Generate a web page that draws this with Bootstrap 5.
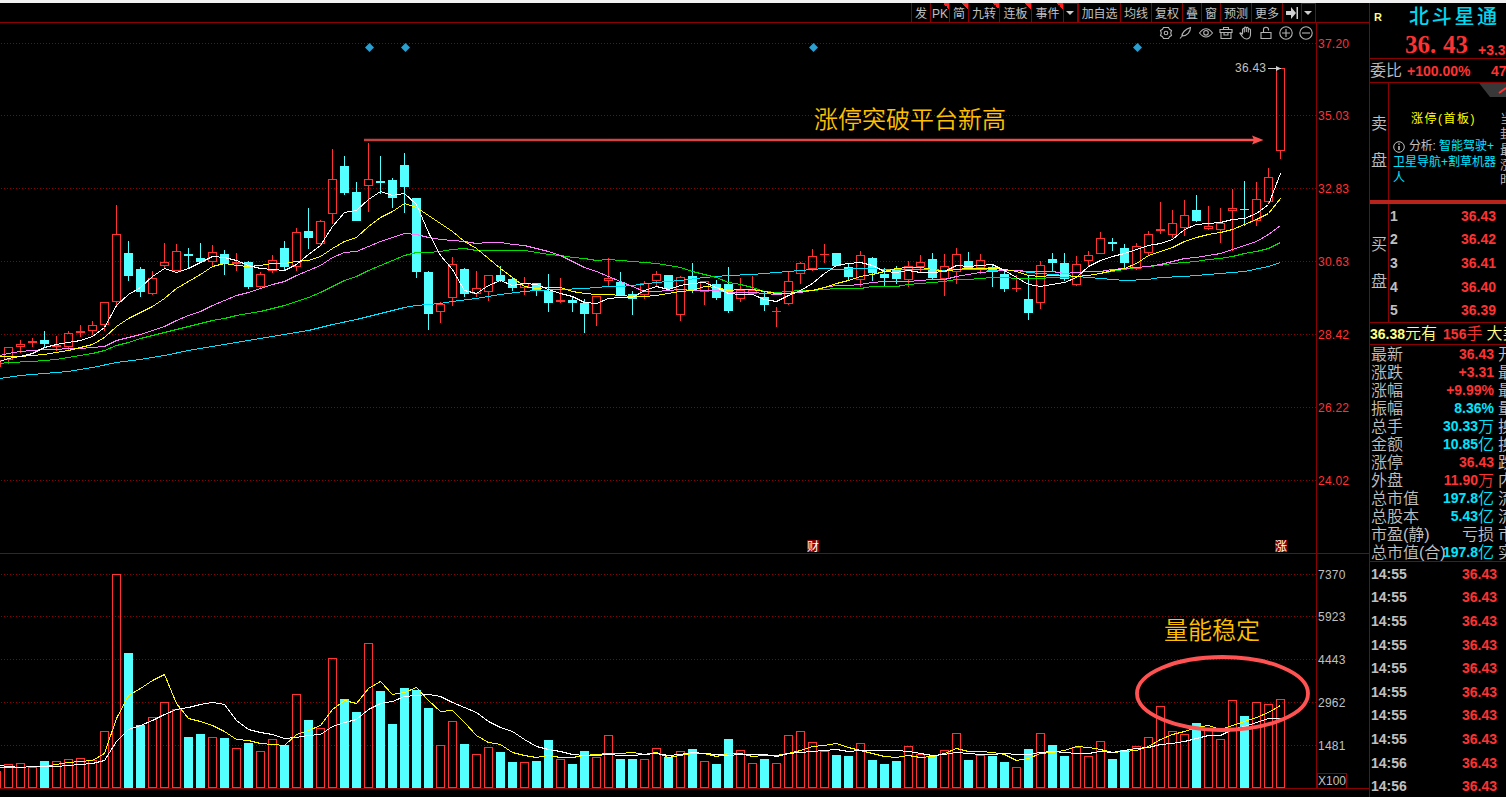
<!DOCTYPE html>
<html lang="zh-CN">
<head>
  <meta charset="UTF-8">
  <title>北斗星通</title>
  <meta name="viewport" content="width=device-width, initial-scale=1">
  <link href="https://cdn.jsdelivr.net/npm/bootstrap@5.3.3/dist/css/bootstrap.min.css" rel="stylesheet">
  <style>
    :root { --line: #8b0000; --up: #ff3232; --down: #54ffff; --gray: #c0c0c0; --aqua: #00e5ff; }
    body {
      background: #000; color: var(--gray); height: 797px; line-height: 1;
      font-family: "Liberation Sans", "Noto Sans CJK SC", sans-serif;
      border-top: 3px solid #f0f0f0;
    }
    .chart-side { width: 1369px; }
    .toolbar { height: 20px; border-bottom: 1px solid var(--line); }
    .tools {
      display: grid; width: 405px; margin-right: 53px; font-size: 12px;
      grid-template-columns: 19px 19px 19px 31px 32px 32px 15px 42px 31px 31px 19px 19px 31px 31px 19px 15px;
    }
    .tools > span { border-left: 1px solid var(--line); white-space: nowrap; padding-top: 1px; }
    .tools .label { padding-top: 5px; letter-spacing: -.1px; }
    .tools .hot { background: linear-gradient(to top right, transparent 50%, #ff2020 50%) top right / 6px 6px no-repeat; }
    .boxed { border: 1px solid var(--line); border-bottom: 0; }
    .icons { top: 0; right: 53px; }
    .icons svg { width: 20px; height: 20px; fill: none; stroke: #b4b4b4; stroke-width: 1.1; }
    svg text { font-size: 12px; letter-spacing: .25px; fill: var(--gray); }

    .quote { width: 137px; border-left: 1px solid var(--line); font-size: 16px; font-weight: 350; white-space: nowrap; }
    b, .num { font-size: 14px; font-weight: 700; }
    .up { color: var(--up); }
    .aqua { color: var(--aqua); }
    .pale { color: #ffff80; }
    .rule-b { border-bottom: 1px solid var(--line); }
    .head { height: 56px; }
    .head > div > * { flex-shrink: 0; }
    .stock { color: #00d8f0; font-size: 20px; letter-spacing: 2.7px; font-weight: 500; }
    .flag-r { font-size: 11px; width: 39px; padding-left: 4px; }
    .last { font: 700 25px "Liberation Serif", serif; line-height: 1; margin: 1px 0 0 35px; }
    .last i { display: inline-block; width: 13px; font-style: normal; }
    .change { margin-left: 10px; }
    .entrust { height: 24px; }
    .entrust .pct { margin-left: 5px; width: 84px; flex-shrink: 0; }
    .book-name { width: 19px; border-right: 1px solid var(--line); }
    .book-name span { padding-top: 5px; }
    .book-name span:first-child { padding-top: 9px; }
    .sell { height: 117px; }
    .analysis { font-size: 12px; line-height: 16px; font-weight: 400; padding-left: 4px; }
    .analysis .title { color: #ffff00; padding: 28px 0 0 18px; letter-spacing: 1.5px; }
    .analysis .aqua { padding-top: 11px; }
    .analysis .lead-in { color: var(--gray); letter-spacing: -.2px; }
    .clip-col { font-size: 13px; line-height: 15.3px; left: 130px; top: 28px; }
    .corner-tab { right: 0; top: 0; }
    .divider { height: 4px; background: #b8231b; }
    .buy { height: 119px; }
    .buy-rows { padding: 0 10px 0 1px; }
    .big-order { height: 22px; }
    .big-order .qty { margin-left: 6px; }
    .big-order .cut { margin-left: 4px; }
    .stat { height: 18px; padding-left: 1px; }
    .stat .name, .stat .next, .stat .unit { padding-top: 2px; }
    .stat .name { width: 60px; }
    .stat .val { width: 63px; }
    .stat .next { margin-left: 4px; }
    .ticks { height: 236px; padding: 0 9px 0 1px; }
  </style>
</head>
<body class="overflow-hidden">
<div class="d-flex h-100">

  <!-- K line chart -->
  <main class="chart-side flex-shrink-0 position-relative d-flex flex-column">
    <div class="toolbar d-flex justify-content-end flex-shrink-0">
      <div class="tools text-center">
        <span class="label">发</span><span class="label hot">PK</span><span class="label hot">简</span><span class="label hot">九转</span><span class="label hot">连板</span><span class="label hot">事件</span>
        <span class="boxed"><svg width="9" height="14"><path d="M0 6h8l-4 4z" fill="#ccc"/></svg></span>
        <span class="label">加自选</span><span class="label">均线</span><span class="label">复权</span><span class="label">叠</span><span class="label">窗</span><span class="label">预测</span><span class="label">更多</span>
        <span><svg width="14" height="16"><path d="M1 7h5V3l5 6-5 6v-4H1z M11.500 3h1.500v12h-1.500z" fill="#d0d0d0"/></svg></span>
        <span class="boxed"><svg width="9" height="14"><path d="M0 6h8l-4 4z" fill="#ccc"/></svg></span>
      </div>
    </div>
    <div class="position-relative">
      <svg id="chart" class="d-block" width="1369" height="774" viewBox="0 23 1369 774"></svg>
      <div class="icons position-absolute d-flex">
        <svg viewBox="0 0 20 20"><path d="M7.500 4.500h5l1 1.800 2 1.200-.8 2.500.8 2.500-2 1.200-1 1.800h-5l-1-1.800-2-1.200.8-2.500-.8-2.500 2-1.200z"/><circle cx="10" cy="10" r="1.800"/></svg>
        <svg viewBox="0 0 20 20"><path d="M4 15.500l3-3.500M6 13.500C5.500 10 9.500 6 14.500 4.500 14.500 9 11 13 6.500 13"/></svg>
        <svg viewBox="0 0 20 20"><path d="M3.500 10Q10 1.500 16.500 10 10 18 3.500 10z"/><circle cx="10" cy="9.800" r="2.300"/></svg>
        <svg viewBox="0 0 20 20"><path d="M7.500 6.500v-2h5v2M4 6.500h12v3H4zM5 9.500v6h10v-6M8 9v3h4V9"/></svg>
        <svg viewBox="0 0 20 20"><path d="M6.500 11.500V6.200q.9-1.300 1.800 0V9.500M8.300 9V4.800q1-1.400 2 0V9M10.300 8.500V5q1-1.300 2 0v4.500M12.300 9V6.500q1.100-1.200 2.200 0V11q0 4.800-3.700 5-2.700.2-4.300-2.200L3.900 10.300q.6-1.300 2.600 1.200"/></svg>
        <svg viewBox="0 0 20 20"><path d="M5 9.500h10v6H5zM7.500 9.500V6.500q0-2.200 2.500-2.200t2.500 2.200v1"/></svg>
        <svg viewBox="0 0 20 20"><path d="M10 6v8M6 10h8"/><circle cx="10" cy="10" r="6.200"/></svg>
        <svg viewBox="0 0 20 20"><path d="M6 10h8"/><circle cx="10" cy="10" r="6.200"/></svg>
      </div>
    </div>
  </main>

  <!-- quote panel -->
  <aside class="quote flex-shrink-0 overflow-hidden">
    <div class="head rule-b">
      <div class="d-flex align-items-center pale pt-1"><b class="flag-r">R</b><span class="stock">北斗星通</span></div>
      <div class="d-flex align-items-end up pt-1"><span class="last">36<i>.</i>43</span><b class="change">+3.31</b></div>
    </div>
    <div class="entrust rule-b d-flex align-items-center"><span>委比</span><b class="up pct">+100.00%</b><b class="up">4725</b></div>
    <div class="sell d-flex position-relative">
      <div class="book-name text-center d-flex flex-column pt-4 gap-3 flex-shrink-0"><span>卖</span><span>盘</span></div>
      <div class="analysis">
        <div class="title">涨停(首板)</div>
        <div class="aqua"><svg class="me-1" width="12" height="12" viewBox="0 0 12 12" fill="none" stroke="#c0c0c0"><circle cx="6" cy="6" r="5.300"/><path d="M6 5v4M6 2.500v1.300" stroke-width="1.600"/></svg><span class="lead-in">分析: </span>智能驾驶+<br>卫星导航+割草机器<br>人</div>
      </div>
      <div class="clip-col position-absolute">当<br>封<br>最<br>涨<br>时</div>
      <svg class="corner-tab position-absolute" width="27" height="14"><path d="M0 0h27v14H11z" fill="#383838"/><path d="M20 10l7-5" stroke="#ff3232" stroke-width="2"/></svg>
    </div>
    <div class="divider"></div>
    <div class="buy rule-b d-flex">
      <div class="book-name text-center d-flex flex-column gap-3 pt-4 flex-shrink-0"><span>买</span><span>盘</span></div>
      <div id="buyRows" class="buy-rows d-flex flex-column flex-grow-1"></div>
    </div>
    <div class="big-order rule-b d-flex align-items-center pale"><b>36.38</b><span>元有</span><b class="up qty">156</b><span class="up">手</span><span class="cut">大卖</span></div>
    <div id="stats" class="rule-b"></div>
    <div id="ticks" class="ticks d-flex flex-column"></div>
  </aside>
</div>

<script src="https://cdn.jsdelivr.net/npm/bootstrap@5.3.3/dist/js/bootstrap.bundle.min.js"></script>
<script>
  // [direction, high, body top, body bottom, low, volume top]
  const candles = [
    ['r',347,347,360,364,764],['r',340,344,347,353,763],['r',338,341,343,347,767],['c',331,340,344,347,761],['r',336,345,347,351,761],
    ['r',331,333,347,350,759],['r',325,331,333,337,758],['r',321,325,331,335,760],['r',302,302,325,331,731],['r',205,234,302,306,574],
    ['c',241,253,276,281,653],['c',267,269,292,297,725],['r',271,278,294,295,717],['r',243,262,266,269,702],['r',244,251,271,271,709],
    ['c',248,254,256,268,737],['c',243,258,262,262,734],['r',245,252,262,266,737],['c',250,254,264,275,738],['r',253,262,264,271,748],
    ['c',261,262,287,289,743],['r',272,274,287,288,751],['r',255,260,271,273,739],['c',241,248,267,270,745],['r',228,232,267,271,694],
    ['c',208,231,238,249,720],['r',220,221,244,245,728],['r',149,179,214,224,658],['c',156,166,193,195,699],['c',182,192,221,221,712],
    ['r',143,179,186,212,643],['c',156,181,183,194,691],['c',178,180,198,208,724],['c',153,165,187,213,688],['c',198,198,272,278,690],
    ['c',271,272,314,330,708],['r',302,304,312,323,745],['r',257,264,298,306,721],['c',268,269,294,297,744],['r',271,288,294,297,754],
    ['r',275,275,292,301,747],['c',266,275,281,282,752],['c',278,279,288,291,762],['r',277,283,288,295,762],['c',283,283,290,296,761],
    ['c',274,291,303,312,740],['r',278,300,302,303,759],['c',296,300,303,312,764],['c',299,303,314,333,751],['r',296,296,314,326,757],
    ['r',258,278,281,286,735],['c',272,282,296,296,759],['c',291,294,299,315,759],['r',281,283,295,299,759],['r',271,274,281,286,748],
    ['c',275,275,289,290,757],['r',276,277,315,321,751],['c',263,276,290,293,749],['r',281,281,292,305,761],['c',280,284,298,300,764],
    ['c',267,284,311,313,739],['r',278,290,299,302,750],['r',276,290,294,294,763],['c',292,297,305,311,759],['r',307,311,312,327,763],
    ['r',271,281,304,305,735],['r',262,263,274,284,731],['r',249,256,269,271,742],['r',244,254,255,263,751],['c',253,253,266,266,755],
    ['c',263,267,277,281,756],['r',251,255,280,287,743],['c',257,258,273,281,760],['c',268,274,278,286,764],['c',266,269,279,284,761],
    ['r',261,266,280,287,746],['r',255,262,267,272,754],['c',253,259,278,280,756],['r',254,266,279,296,750],['r',248,254,272,284,733],
    ['c',252,261,268,268,760],['r',254,260,268,274,755],['c',265,267,271,287,756],['c',271,274,289,292,762],['r',275,288,289,292,767],
    ['c',275,299,313,320,749],['r',261,265,303,309,733],['c',253,259,263,271,745],['c',253,263,279,281,756],['r',256,264,285,286,747],
    ['r',251,255,261,266,756],['r',232,238,254,254,741],['c',238,242,244,251,759],['c',244,248,263,268,750],['r',243,246,269,270,746],
    ['r',231,234,253,256,737],['r',202,229,231,234,706],['r',210,223,235,238,731],['r',200,215,228,236,734],['c',195,210,221,222,723],
    ['r',206,226,229,230,730],['r',208,223,230,243,739],['r',189,208,211,251,700],['c',181,209,210,226,716],['r',182,199,221,226,702],
    ['r',168,177,202,203,704],['r',68,68,151,159,699]
  ];

  // moving averages: the first value sits on the left edge, then one per candle; 0 = no own point
  const averages = [
    ['#00e5ff', [378,0,375,0,373,0,371,0,367,0,362,0,359,0,355,0,350,0,346,0,342,0,338,0,334,0,330,0,324,0,319,0,313,0,307,305,304,303,301,0,298,0,294,0,291,290,0,289,0,288,287,286,286,285,0,282,0,280,0,277,0,275,0,274,0,272,0,270,269,268,269,0,268,0,0,269,0,0,269,270,269,0,0,0,0,270,272,0,274,0,276,0,278,0,280,0,279,277,0,276,275,0,273,0,271,0,266,262]],
    ['#00e000', [363,362,0,361,360,359,357,355,353,350,345,342,338,335,332,329,326,323,320,318,315,313,311,308,305,301,297,292,286,280,276,270,265,260,255,252,252,251,249,248,250,250,250,250,250,252,254,255,257,258,260,259,260,261,262,263,265,267,271,274,277,282,284,287,291,292,291,290,290,289,288,288,288,286,286,286,284,283,282,281,279,279,278,277,277,278,278,278,277,277,276,275,273,271,269,267,266,265,263,262,261,259,258,256,253,251,248,242]],
    ['#ff80ff', [355,353,351,350,349,349,348,348,347,346,340,337,334,330,326,320,315,311,305,300,295,292,288,284,281,275,270,265,257,252,251,246,241,237,233,234,237,239,240,241,243,242,242,244,245,248,251,255,261,267,271,276,281,286,291,291,290,289,290,290,290,292,292,292,293,294,293,292,290,287,285,285,284,282,281,281,281,280,279,279,276,274,272,271,270,270,271,271,271,273,272,271,271,269,268,267,266,264,261,258,257,255,253,249,245,241,234,225]],
    ['#ffff00', [356,356,356,355,354,352,350,347,344,337,326,318,312,306,298,288,281,274,266,263,265,266,265,263,263,261,260,256,248,241,237,226,217,211,203,207,215,223,231,241,248,258,268,277,286,288,287,287,291,293,294,294,295,296,296,295,293,291,290,286,287,290,289,289,291,293,293,291,290,287,283,280,276,274,271,268,267,267,269,271,269,268,268,268,269,271,275,276,275,275,276,275,273,270,268,263,255,251,247,241,237,234,232,229,224,219,213,198]],
    ['#ffffff', [361,358,356,353,347,344,342,340,336,327,305,294,287,276,268,272,268,262,256,257,260,265,268,269,270,264,254,245,226,212,210,199,191,195,193,204,232,255,269,290,293,285,280,285,283,284,289,293,296,302,303,298,297,297,290,286,289,285,283,282,287,293,294,294,299,301,295,290,283,273,265,263,262,265,271,272,270,272,272,271,265,266,265,264,270,277,284,286,284,282,277,266,260,256,253,249,245,243,239,229,224,223,222,219,218,213,204,173]],
    ['#ffff00', [767,767,767,766,766,764,762,761,760,753,718,695,688,680,674,703,718,721,725,731,739,740,743,744,745,734,730,725,709,700,703,688,681,694,692,687,700,711,710,722,735,742,744,752,755,757,755,757,757,755,754,753,753,752,754,752,757,755,753,753,756,753,753,756,755,755,753,750,746,745,743,747,750,753,756,757,755,757,756,753,748,751,751,752,754,760,758,753,752,750,746,747,749,752,751,750,746,739,734,731,727,725,729,725,721,717,712,705]],
    ['#ffffff', [765,766,767,766,766,766,765,764,763,760,741,729,725,720,714,709,707,704,702,704,720,729,732,734,738,737,735,734,726,722,719,709,703,701,696,695,694,696,702,707,712,721,727,731,739,746,749,751,754,755,755,754,755,755,754,753,755,754,752,753,754,755,754,754,754,756,753,752,751,750,749,751,750,750,750,750,751,753,755,754,752,753,754,754,753,754,754,752,751,752,753,753,751,752,750,748,747,744,743,741,738,735,735,729,726,722,718,718]]
  ];

  const line = (x1, y1, x2, y2, color, extra = '') =>
    `<line x1="${x1}" y1="${y1}" x2="${x2}" y2="${y2}" stroke="${color}" ${extra}/>`;
  const RED = '#ff3232', CYAN = '#54ffff', DARK = '#8b0000';
  let out = '';

  // grid and frame
  const priceGrid = [[43,'37.20'],[115,'35.03'],[188,'32.83'],[261,'30.63'],[334,'28.42'],[407,'26.22'],[480,'24.02']];
  const volumeGrid = [[574,'7370'],[616,'5923'],[659,'4443'],[702,'2962'],[745,'1481']];
  priceGrid.forEach(([y, label]) => {
    out += line(1, y + .5, 1316, y + .5, DARK, 'stroke-dasharray="1 2"');
    out += `<text x="1318" y="${y + 5}" style="fill:#ff3232">${label}</text>`;
  });
  volumeGrid.forEach(([y, label]) => {
    out += line(1, y + .5, 1316, y + .5, DARK, 'stroke-dasharray="1 2"');
    out += `<text x="1318" y="${y + 5}">${label}</text>`;
  });
  out += line(1316.5, 23, 1316.5, 788, DARK) + line(0, 553.5, 1369, 553.5, DARK) + line(0, 788.5, 1369, 788.5, DARK);
  out += `<rect x="1317.5" y="773.5" width="29" height="15" fill="none" stroke="${DARK}"/><text x="1318" y="785" style="letter-spacing:0">X100</text>`;

  // bars
  out += `<g shape-rendering="crispEdges">`;
  out += line(.5, 360, .5, 367, RED) + line(.5, 771, .5, 788, RED);
  candles.forEach(([dir, high, top, bottom, low, vol], i) => {
    const x = 4 + 12 * i;
    const h = bottom - top;
    if (dir === 'c') {
      out += line(x + 4.5, high, x + 4.5, low, CYAN);
      out += `<rect x="${x}" y="${top}" width="9" height="${h}" fill="${CYAN}"/>`;
      out += `<rect x="${x}" y="${vol}" width="9" height="${788 - vol}" fill="${CYAN}"/>`;
    } else {
      out += line(x + 4.5, high, x + 4.5, top, RED) + line(x + 4.5, bottom, x + 4.5, low, RED);
      out += h < 3 ? `<rect x="${x}" y="${top}" width="9" height="${h}" fill="${RED}"/>`
                   : `<rect x="${x + .5}" y="${top + .5}" width="8" height="${h - 1}" fill="none" stroke="${RED}"/>`;
      out += `<rect x="${x + .5}" y="${vol + .5}" width="8" height="${787 - vol}" fill="none" stroke="${RED}"/>`;
    }
  });
  averages.forEach(([color, values]) => {
    const points = values.map((y, k) => y ? `${k ? 12 * k - 3.5 : 0},${y + .5}` : '').join(' ');
    out += `<polyline points="${points}" fill="none" stroke="${color}"/>`;
  });
  out += `</g>`;

  // event marks
  [369.5, 405.5, 813.5, 1137.5].forEach(x => {
    out += `<path d="M${x} 43l4.500 4.500-4.500 4.500-4.500-4.500z" fill="#2c9fce"/>`;
  });
  [[807, '财'], [1275, '涨']].forEach(([x, t]) => {
    out += `<rect x="${x}" y="540" width="12" height="12" fill="#8b0000"/><text x="${x}" y="550.5" style="fill:#fff;letter-spacing:0">${t}</text>`;
  });
  out += `<text x="1235" y="72">36.43</text>` + line(1268, 68.5, 1281, 68.5, '#d0d0d0') + `<path d="M1276 66l5 2.500-5 2.500z" fill="#d0d0d0"/>`;

  // drawn notes
  out += `<defs><linearGradient id="fade" gradientUnits="userSpaceOnUse" x1="364" x2="1254"><stop stop-color="#c04040"/><stop offset="1" stop-color="#ff5050"/></linearGradient></defs>`;
  out += line(364, 140, 1254, 140.01, 'url(#fade)', 'stroke-width="2.500"') + `<path d="M1252 135.500l11.500 4.500-11.500 4.500 2-4.500z" fill="#ff5050"/>`;
  out += `<text x="814" y="128" style="font-size:24px;fill:#ffc000;letter-spacing:0;font-weight:350">涨停突破平台新高</text>`;
  out += `<text x="1164" y="639" style="font-size:24px;fill:#ffc000;letter-spacing:0;font-weight:350">量能稳定</text>`;
  out += `<ellipse cx="1222.500" cy="693.500" rx="85.500" ry="36.500" fill="none" stroke="#ff5252" stroke-width="3.800"/>`;
  document.getElementById('chart').innerHTML = out;

  // side lists
  document.getElementById('buyRows').innerHTML = ['36.43','36.42','36.41','36.40','36.39'].map((p, i) =>
    `<div class="d-flex flex-fill align-items-center justify-content-between num"><span>${i + 1}</span><span class="up">${p}</span></div>`).join('');

  const stats = [
    ['最新','36.43','','up','开'],['涨跌','+3.31','','up','最'],['涨幅','+9.99%','','up','最'],['振幅','8.36%','','aqua','量'],
    ['总手','30.33','万','aqua','换'],['金额','10.85','亿','aqua','换'],['涨停','36.43','','up','跌'],['外盘','11.90','万','up','内'],
    ['总市值','197.8','亿','aqua','流'],['总股本','5.43','亿','aqua','流'],['市盈(静)','','亏损','','市'],['总市值(合)','197.8','亿','aqua','实']
  ];
  document.getElementById('stats').innerHTML = stats.map(([name, num, unit, color, next]) =>
    `<div class="stat d-flex align-items-center"><span class="name flex-shrink-0">${name}</span><span class="val flex-shrink-0 d-flex justify-content-end align-items-center ${color}"><b>${num}</b><span class="unit">${unit}</span></span><span class="next">${next}</span></div>`).join('');

  document.getElementById('ticks').innerHTML = Array.from({ length: 10 }, (_, i) =>
    `<div class="d-flex flex-fill align-items-center justify-content-between num"><span>14:5${i < 8 ? 5 : 6}</span><span class="up">36.43</span></div>`).join('');
</script>
</body>
</html>
